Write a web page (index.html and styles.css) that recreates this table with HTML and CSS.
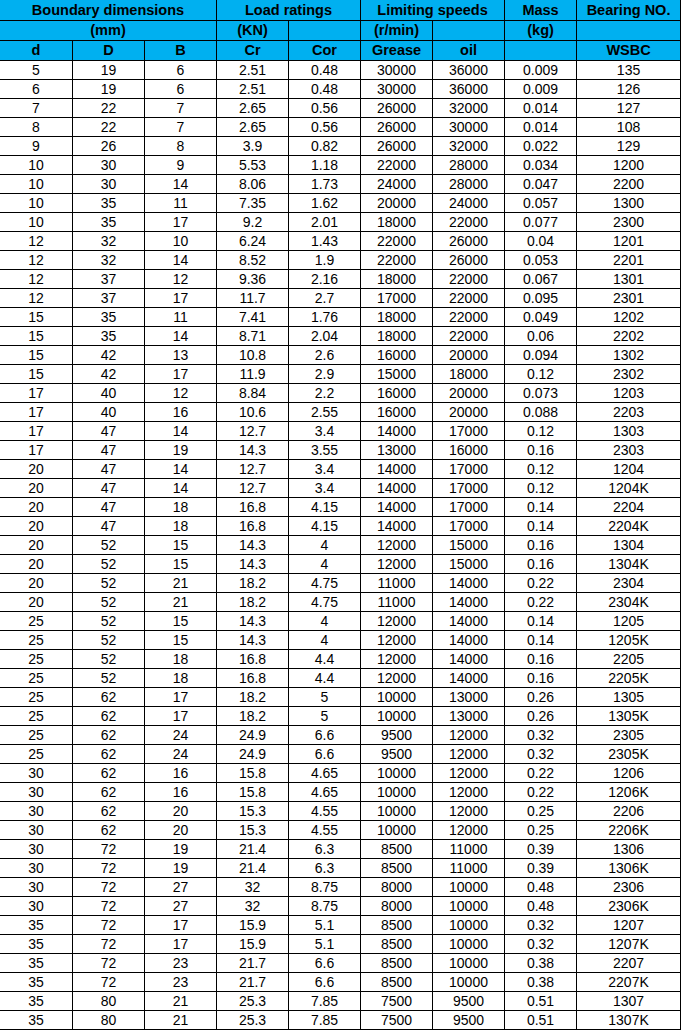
FILE: index.html
```html
<!DOCTYPE html>
<html>
<head>
<meta charset="utf-8">
<link rel="stylesheet" href="styles.css">
</head>
<body>
<table class="spec">
<colgroup>
<col class="c-first"><col class="c"><col class="c"><col class="c"><col class="c"><col class="c"><col class="c"><col class="c"><col class="c-last">
</colgroup>
<thead>
<tr class="h1"><th colspan="3">Boundary dimensions</th><th colspan="2">Load ratings</th><th colspan="2">Limiting speeds</th><th>Mass</th><th>Bearing NO.</th></tr>
<tr class="h2"><th colspan="3">(mm)</th><th>(KN)</th><th></th><th>(r/min)</th><th></th><th>(kg)</th><th></th></tr>
<tr class="h3"><th>d</th><th>D</th><th>B</th><th>Cr</th><th>Cor</th><th>Grease</th><th>oil</th><th></th><th>WSBC</th></tr>
</thead>
<tbody>
<tr><td>5</td><td>19</td><td>6</td><td>2.51</td><td>0.48</td><td>30000</td><td>36000</td><td>0.009</td><td>135</td></tr>
<tr><td>6</td><td>19</td><td>6</td><td>2.51</td><td>0.48</td><td>30000</td><td>36000</td><td>0.009</td><td>126</td></tr>
<tr><td>7</td><td>22</td><td>7</td><td>2.65</td><td>0.56</td><td>26000</td><td>32000</td><td>0.014</td><td>127</td></tr>
<tr><td>8</td><td>22</td><td>7</td><td>2.65</td><td>0.56</td><td>26000</td><td>30000</td><td>0.014</td><td>108</td></tr>
<tr><td>9</td><td>26</td><td>8</td><td>3.9</td><td>0.82</td><td>26000</td><td>32000</td><td>0.022</td><td>129</td></tr>
<tr><td>10</td><td>30</td><td>9</td><td>5.53</td><td>1.18</td><td>22000</td><td>28000</td><td>0.034</td><td>1200</td></tr>
<tr><td>10</td><td>30</td><td>14</td><td>8.06</td><td>1.73</td><td>24000</td><td>28000</td><td>0.047</td><td>2200</td></tr>
<tr><td>10</td><td>35</td><td>11</td><td>7.35</td><td>1.62</td><td>20000</td><td>24000</td><td>0.057</td><td>1300</td></tr>
<tr><td>10</td><td>35</td><td>17</td><td>9.2</td><td>2.01</td><td>18000</td><td>22000</td><td>0.077</td><td>2300</td></tr>
<tr><td>12</td><td>32</td><td>10</td><td>6.24</td><td>1.43</td><td>22000</td><td>26000</td><td>0.04</td><td>1201</td></tr>
<tr><td>12</td><td>32</td><td>14</td><td>8.52</td><td>1.9</td><td>22000</td><td>26000</td><td>0.053</td><td>2201</td></tr>
<tr><td>12</td><td>37</td><td>12</td><td>9.36</td><td>2.16</td><td>18000</td><td>22000</td><td>0.067</td><td>1301</td></tr>
<tr><td>12</td><td>37</td><td>17</td><td>11.7</td><td>2.7</td><td>17000</td><td>22000</td><td>0.095</td><td>2301</td></tr>
<tr><td>15</td><td>35</td><td>11</td><td>7.41</td><td>1.76</td><td>18000</td><td>22000</td><td>0.049</td><td>1202</td></tr>
<tr><td>15</td><td>35</td><td>14</td><td>8.71</td><td>2.04</td><td>18000</td><td>22000</td><td>0.06</td><td>2202</td></tr>
<tr><td>15</td><td>42</td><td>13</td><td>10.8</td><td>2.6</td><td>16000</td><td>20000</td><td>0.094</td><td>1302</td></tr>
<tr><td>15</td><td>42</td><td>17</td><td>11.9</td><td>2.9</td><td>15000</td><td>18000</td><td>0.12</td><td>2302</td></tr>
<tr><td>17</td><td>40</td><td>12</td><td>8.84</td><td>2.2</td><td>16000</td><td>20000</td><td>0.073</td><td>1203</td></tr>
<tr><td>17</td><td>40</td><td>16</td><td>10.6</td><td>2.55</td><td>16000</td><td>20000</td><td>0.088</td><td>2203</td></tr>
<tr><td>17</td><td>47</td><td>14</td><td>12.7</td><td>3.4</td><td>14000</td><td>17000</td><td>0.12</td><td>1303</td></tr>
<tr><td>17</td><td>47</td><td>19</td><td>14.3</td><td>3.55</td><td>13000</td><td>16000</td><td>0.16</td><td>2303</td></tr>
<tr><td>20</td><td>47</td><td>14</td><td>12.7</td><td>3.4</td><td>14000</td><td>17000</td><td>0.12</td><td>1204</td></tr>
<tr><td>20</td><td>47</td><td>14</td><td>12.7</td><td>3.4</td><td>14000</td><td>17000</td><td>0.12</td><td>1204K</td></tr>
<tr><td>20</td><td>47</td><td>18</td><td>16.8</td><td>4.15</td><td>14000</td><td>17000</td><td>0.14</td><td>2204</td></tr>
<tr><td>20</td><td>47</td><td>18</td><td>16.8</td><td>4.15</td><td>14000</td><td>17000</td><td>0.14</td><td>2204K</td></tr>
<tr><td>20</td><td>52</td><td>15</td><td>14.3</td><td>4</td><td>12000</td><td>15000</td><td>0.16</td><td>1304</td></tr>
<tr><td>20</td><td>52</td><td>15</td><td>14.3</td><td>4</td><td>12000</td><td>15000</td><td>0.16</td><td>1304K</td></tr>
<tr><td>20</td><td>52</td><td>21</td><td>18.2</td><td>4.75</td><td>11000</td><td>14000</td><td>0.22</td><td>2304</td></tr>
<tr><td>20</td><td>52</td><td>21</td><td>18.2</td><td>4.75</td><td>11000</td><td>14000</td><td>0.22</td><td>2304K</td></tr>
<tr><td>25</td><td>52</td><td>15</td><td>14.3</td><td>4</td><td>12000</td><td>14000</td><td>0.14</td><td>1205</td></tr>
<tr><td>25</td><td>52</td><td>15</td><td>14.3</td><td>4</td><td>12000</td><td>14000</td><td>0.14</td><td>1205K</td></tr>
<tr><td>25</td><td>52</td><td>18</td><td>16.8</td><td>4.4</td><td>12000</td><td>14000</td><td>0.16</td><td>2205</td></tr>
<tr><td>25</td><td>52</td><td>18</td><td>16.8</td><td>4.4</td><td>12000</td><td>14000</td><td>0.16</td><td>2205K</td></tr>
<tr><td>25</td><td>62</td><td>17</td><td>18.2</td><td>5</td><td>10000</td><td>13000</td><td>0.26</td><td>1305</td></tr>
<tr><td>25</td><td>62</td><td>17</td><td>18.2</td><td>5</td><td>10000</td><td>13000</td><td>0.26</td><td>1305K</td></tr>
<tr><td>25</td><td>62</td><td>24</td><td>24.9</td><td>6.6</td><td>9500</td><td>12000</td><td>0.32</td><td>2305</td></tr>
<tr><td>25</td><td>62</td><td>24</td><td>24.9</td><td>6.6</td><td>9500</td><td>12000</td><td>0.32</td><td>2305K</td></tr>
<tr><td>30</td><td>62</td><td>16</td><td>15.8</td><td>4.65</td><td>10000</td><td>12000</td><td>0.22</td><td>1206</td></tr>
<tr><td>30</td><td>62</td><td>16</td><td>15.8</td><td>4.65</td><td>10000</td><td>12000</td><td>0.22</td><td>1206K</td></tr>
<tr><td>30</td><td>62</td><td>20</td><td>15.3</td><td>4.55</td><td>10000</td><td>12000</td><td>0.25</td><td>2206</td></tr>
<tr><td>30</td><td>62</td><td>20</td><td>15.3</td><td>4.55</td><td>10000</td><td>12000</td><td>0.25</td><td>2206K</td></tr>
<tr><td>30</td><td>72</td><td>19</td><td>21.4</td><td>6.3</td><td>8500</td><td>11000</td><td>0.39</td><td>1306</td></tr>
<tr><td>30</td><td>72</td><td>19</td><td>21.4</td><td>6.3</td><td>8500</td><td>11000</td><td>0.39</td><td>1306K</td></tr>
<tr><td>30</td><td>72</td><td>27</td><td>32</td><td>8.75</td><td>8000</td><td>10000</td><td>0.48</td><td>2306</td></tr>
<tr><td>30</td><td>72</td><td>27</td><td>32</td><td>8.75</td><td>8000</td><td>10000</td><td>0.48</td><td>2306K</td></tr>
<tr><td>35</td><td>72</td><td>17</td><td>15.9</td><td>5.1</td><td>8500</td><td>10000</td><td>0.32</td><td>1207</td></tr>
<tr><td>35</td><td>72</td><td>17</td><td>15.9</td><td>5.1</td><td>8500</td><td>10000</td><td>0.32</td><td>1207K</td></tr>
<tr><td>35</td><td>72</td><td>23</td><td>21.7</td><td>6.6</td><td>8500</td><td>10000</td><td>0.38</td><td>2207</td></tr>
<tr><td>35</td><td>72</td><td>23</td><td>21.7</td><td>6.6</td><td>8500</td><td>10000</td><td>0.38</td><td>2207K</td></tr>
<tr><td>35</td><td>80</td><td>21</td><td>25.3</td><td>7.85</td><td>7500</td><td>9500</td><td>0.51</td><td>1307</td></tr>
<tr><td>35</td><td>80</td><td>21</td><td>25.3</td><td>7.85</td><td>7500</td><td>9500</td><td>0.51</td><td>1307K</td></tr>
</tbody>
</table>
</body>
</html>
```

FILE: styles.css
```css
html, body {
  margin: 0;
  padding: 0;
  background: #ffffff;
}

body {
  font-family: "Liberation Sans", Arial, sans-serif;
  color: #000000;
  overflow: hidden;
}

.spec {
  table-layout: fixed;
  border-collapse: separate;
  border-spacing: 1px;
  background: #000000;
  margin: -1px 0 0 -1px;
  width: 682px;
}

.c-first { width: 72px; }
.c { width: 71px; }
.c-last { width: 103px; }

.spec th,
.spec td {
  padding: 0;
  text-align: center;
  vertical-align: middle;
  white-space: nowrap;
  overflow: hidden;
}

.spec th {
  background: #00b0f0;
  font-weight: bold;
  font-size: 14.5px;
  line-height: 17px;
  color: #000000;
}

.h1 th { height: 20px; }
.h2 th,
.h3 th { height: 19px; }

.spec td {
  background: #ffffff;
  font-size: 14px;
  line-height: 17px;
  height: 18px;
}
```
